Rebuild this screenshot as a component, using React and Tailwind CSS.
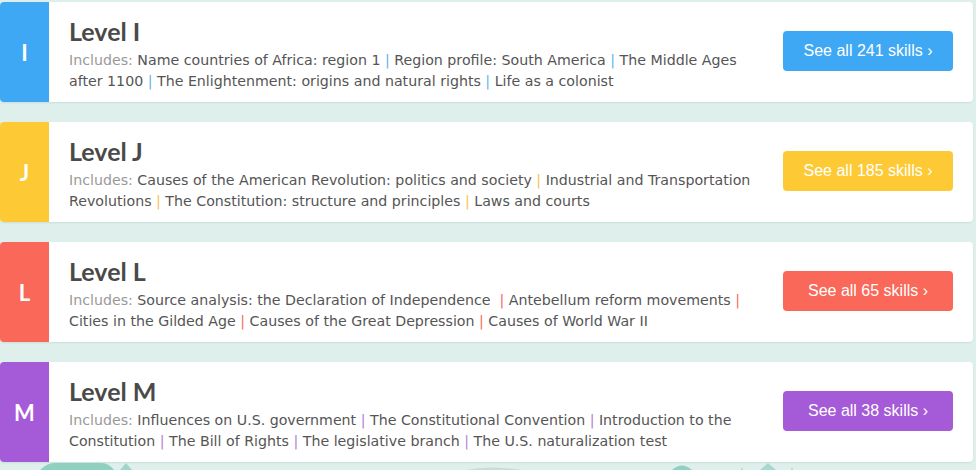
const levels = [
  {
    letter: 'I',
    strip: 'bg-[#3ea8f4]',
    button: 'bg-[#3ea8f4]',
    pipe: 'text-[#5fb4f2]',
    count: 241,
    skills: [
      'Name countries of Africa: region 1',
      'Region profile: South America',
      'The Middle Ages after 1100',
      'The Enlightenment: origins and natural rights',
      'Life as a colonist',
    ],
  },
  {
    letter: 'J',
    strip: 'bg-[#fdca36]',
    button: 'bg-[#fdca36]',
    pipe: 'text-[#f5c35a]',
    count: 185,
    skills: [
      'Causes of the American Revolution: politics and society',
      'Industrial and Transportation Revolutions',
      'The Constitution: structure and principles',
      'Laws and courts',
    ],
  },
  {
    letter: 'L',
    strip: 'bg-[#f96858]',
    button: 'bg-[#f96858]',
    pipe: 'text-[#f2705f]',
    count: 65,
    skills: [
      'Source analysis: the Declaration of Independence\u00a0',
      'Antebellum reform movements',
      'Cities in the Gilded Age',
      'Causes of the Great Depression',
      'Causes of World War II',
    ],
  },
  {
    letter: 'M',
    strip: 'bg-[#a55ad8]',
    button: 'bg-[#a55ad8]',
    pipe: 'text-[#b384d8]',
    count: 38,
    skills: [
      'Influences on U.S. government',
      'The Constitutional Convention',
      'Introduction to the Constitution',
      'The Bill of Rights',
      'The legislative branch',
      'The U.S. naturalization test',
    ],
  },
]

function LevelCard({ level }) {
  return (
    <div className="flex h-[100px] w-[973px] rounded-[4px] bg-white shadow-[0_1px_2px_rgba(80,130,120,0.15)]">
      <div
        className={`flex w-[49px] shrink-0 items-center justify-center rounded-l-[4px] font-['Lato',sans-serif] text-[22px] font-bold text-white ${level.strip}`}
      >
        {level.letter}
      </div>
      <div className="flex min-w-0 flex-1 flex-col justify-center pl-5 pt-[5px]">
        <h2 className="font-['Lato',sans-serif] text-[25px] font-bold leading-[28px] text-[#4a4a4a]">
          Level {level.letter}
        </h2>
        <p className="mt-[5px] font-['DejaVu_Sans',sans-serif] text-[14.2px] leading-[21px] text-[#555]">
          <span className="text-[#9a9a9a]">Includes: </span>
          {level.skills.map((skill, i) => (
            <span key={skill}>
              {i > 0 && <span className={level.pipe}> | </span>}
              {skill}
            </span>
          ))}
        </p>
      </div>
      <div className="flex shrink-0 items-center pl-[24px] pr-[20px] pb-[2px]">
        <a
          href="#"
          className={`flex h-[40px] w-[170px] items-center justify-center rounded-[4px] font-['Liberation_Sans',sans-serif] text-[16px] text-white ${level.button}`}
        >
          See all {level.count} skills ›
        </a>
      </div>
    </div>
  )
}

function Hills() {
  // low teal shapes peeking out below the last card
  return (
    <svg width="976" height="8" viewBox="0 0 976 8" className="block">
      <path d="M40 8 Q48 0 56 1 L100 1 Q108 0 114 8 Z" fill="#8fd0c0" />
      <path d="M120 8 L126 1 L132 8 Z" fill="#9fd6c8" />
      <path d="M465 8 Q490 3 522 8 Z" fill="#c9dcd7" />
      <path d="M672 8 Q682 -1 692 8 Z" fill="#8fd0c0" />
      <path d="M741 8 L742 5 L743 8 Z" fill="#a8d8cc" />
      <path d="M760 8 L768 1 L776 8 Z" fill="#a8d8cc" />
      <path d="M791 8 L792 5 L793 8 Z" fill="#a8d8cc" />
    </svg>
  )
}

export default function App() {
  return (
    <div className="h-[470px] w-[976px] overflow-hidden bg-[#dff0ec] pt-[2px]">
      <div className="flex flex-col gap-5">
        {levels.map((level) => (
          <LevelCard key={level.letter} level={level} />
        ))}
      </div>
      <Hills />
    </div>
  )
}
